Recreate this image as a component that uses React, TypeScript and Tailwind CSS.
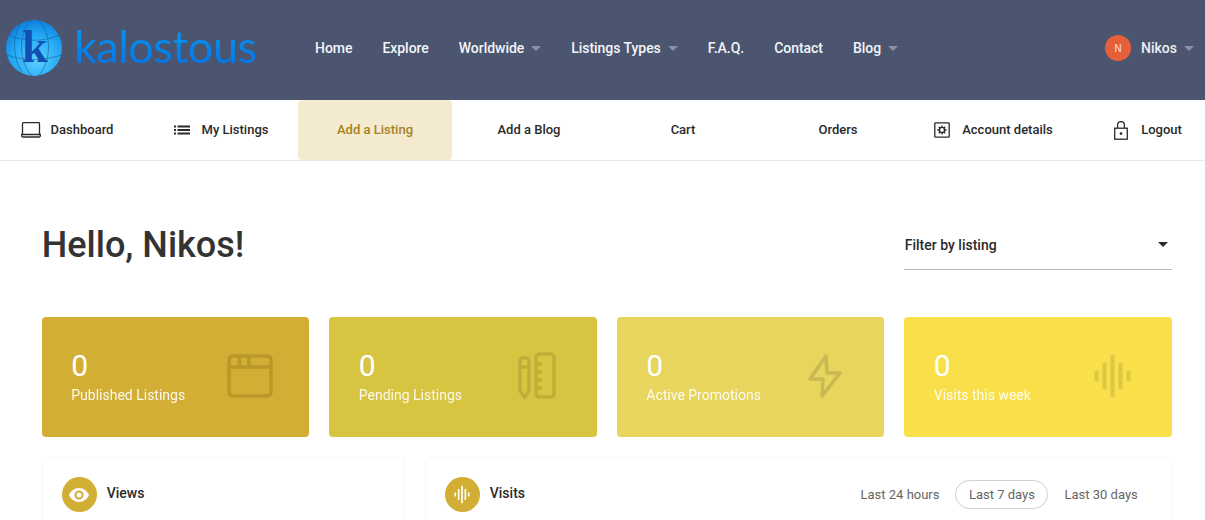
import type { ReactNode } from "react";

const navLinks = [
  { label: "Home" },
  { label: "Explore" },
  { label: "Worldwide", caret: true },
  { label: "Listings Types", caret: true },
  { label: "F.A.Q." },
  { label: "Contact" },
  { label: "Blog", caret: true },
];

function Caret({ className = "border-t-[#8a91a5]" }: { className?: string }) {
  return <span className={`inline-block h-0 w-0 border-x-[5px] border-t-[5px] border-x-transparent ${className}`} />;
}

function Globe() {
  return (
    <svg width="58" height="58" viewBox="0 0 58 58" className="shrink-0">
      <defs>
        <radialGradient id="globe" cx="0.55" cy="0.7" r="0.75">
          <stop offset="0" stopColor="#5fd0ff" />
          <stop offset="0.55" stopColor="#25aaf6" />
          <stop offset="1" stopColor="#0b78d8" />
        </radialGradient>
      </defs>
      <circle cx="29" cy="29" r="28" fill="url(#globe)" />
      <g fill="none" stroke="#155f96" strokeWidth="0.8" opacity="0.75">
        <path d="M27 1C12 14 14 44 27 57" />
        <path d="M33 1C48 14 46 44 33 57" />
        <path d="M4 16C18 23 40 23 54 16" />
        <path d="M2 36C18 42 40 42 56 36" />
        <path d="M15 5C7 20 8 40 17 53" />
      </g>
      <text x="17" y="43" fontFamily="'Liberation Serif', serif" fontWeight="700" fontSize="46" fill="#114fb4">k</text>
    </svg>
  );
}

function LaptopIcon() {
  return (
    <svg width="20" height="16" viewBox="0 0 20 16" fill="none" stroke="#2a2a2a" strokeWidth="1.3">
      <path d="M1.500 12.500V1.500a.8.8 0 0 1 .8-.8h15.400a.8.8 0 0 1 .8.8v11" />
      <path d="M.7 12.500h18.600v1.300a1.200 1.200 0 0 1-1.200 1.200H1.900a1.200 1.200 0 0 1-1.200-1.200z" />
    </svg>
  );
}

function ListIcon() {
  return (
    <svg width="16" height="10" viewBox="0 0 16 10" fill="#2a2a2a">
      <rect x="0" y="0.5" width="2" height="2" />
      <rect x="0" y="4" width="2" height="2" />
      <rect x="0" y="7.5" width="2" height="2" />
      <rect x="3.5" y="0.5" width="12.5" height="2" />
      <rect x="3.5" y="4" width="12.5" height="2" />
      <rect x="3.5" y="7.5" width="12.5" height="2" />
    </svg>
  );
}

function AccountIcon() {
  return (
    <svg width="16" height="16" viewBox="0 0 16 16" fill="none" stroke="#2a2a2a">
      <rect x="0.8" y="0.8" width="14.4" height="14.4" rx="0.8" strokeWidth="1.3" />
      <circle cx="8" cy="8" r="2.6" strokeWidth="1.4" />
      <path d="M8 3.400v2M8 10.600v2M3.400 8h2M10.600 8h2M4.800 4.800l1.400 1.400M9.800 9.800l1.400 1.400M11.200 4.800 9.800 6.200M6.200 9.800l-1.400 1.400" strokeWidth="1.3" />
    </svg>
  );
}

function LockIcon() {
  return (
    <svg width="16" height="19" viewBox="0 0 16 19" fill="none" stroke="#2a2a2a" strokeWidth="1.3">
      <rect x="1.7" y="7.2" width="12.6" height="11" />
      <path d="M4.600 7V4a3.400 3.400 0 0 1 6.800 0v3" />
      <circle cx="8" cy="12.6" r="1.3" fill="#2a2a2a" stroke="none" />
    </svg>
  );
}

const subLinks = [
  { label: "Dashboard", icon: <LaptopIcon />, extra: "gap-[10px]" },
  { label: "My Listings", icon: <ListIcon />, extra: "gap-3" },
  { label: "Add a Listing", active: true },
  { label: "Add a Blog" },
  { label: "Cart" },
  { label: "Orders", extra: "pl-[2px]" },
  { label: "Account details", icon: <AccountIcon />, extra: "gap-3 pl-[5px]" },
  { label: "Logout", icon: <LockIcon />, extra: "gap-3 pl-[5px]" },
];

function BrowserGlyph() {
  return (
    <svg width="46" height="44" viewBox="0 0 46 44" fill="none" stroke="currentColor" strokeWidth="3.5">
      <rect x="2" y="2" width="42" height="40" rx="4" />
      <path d="M2 13h42M12.500 2v11M22 2v11" />
    </svg>
  );
}

function PencilRulerGlyph() {
  return (
    <svg width="38" height="48" viewBox="0 0 38 48" fill="none" stroke="currentColor" strokeWidth="3.5">
      <path d="M2 10a4.500 4.500 0 0 1 9 0v29l-4.500 6L2 39z" />
      <path d="M2 15h9" />
      <rect x="18" y="2" width="18" height="43" rx="3.500" />
      <path d="M18 12h6M18 20h6M18 28h6M18 36h6" />
    </svg>
  );
}

function BoltGlyph() {
  return (
    <svg width="34" height="44" viewBox="0 0 34 44" fill="none" stroke="currentColor" strokeWidth="3.5" strokeLinejoin="round">
      <path d="M18 2 2 25h13l-1 17 18-23H19z" />
    </svg>
  );
}

function WaveGlyph({ w = 39, h = 44, sw = 4 }: { w?: number; h?: number; sw?: number }) {
  return (
    <svg width={w} height={h} viewBox="0 0 38 44" fill="none" stroke="currentColor" strokeWidth={sw}>
      <path d="M3 17v10M11 9v26M19 1v42M27 9v26M35 17v10" />
    </svg>
  );
}

const statCards = [
  { label: "Published Listings", bg: "bg-[#d2ae34]", tone: "text-[#b89829]", icon: <BrowserGlyph />, iconBox: "mr-[36px]" },
  { label: "Pending Listings", bg: "bg-[#d7c441]", tone: "text-[#bfae38]", icon: <PencilRulerGlyph />, iconBox: "mr-[41px]" },
  { label: "Active Promotions", bg: "bg-[#e7d55e]", tone: "text-[#c9b952]", icon: <BoltGlyph />, iconBox: "mr-[42px]" },
  { label: "Visits this week", bg: "bg-[#f9e04b]", tone: "text-[#dcc642]", icon: <WaveGlyph />, iconBox: "mr-[40px]" },
];

function CircleIcon({ children }: { children: ReactNode }) {
  return (
    <span className="flex h-[35px] w-[35px] shrink-0 items-center justify-center rounded-full bg-[#d2ae34] text-white">
      {children}
    </span>
  );
}

export default function App() {
  return (
    <div className="h-[520px] w-[1205px] overflow-hidden bg-white font-['Roboto',sans-serif] text-[#2a2a2a]">
      {/* Top bar */}
      <header className="flex h-[100px] items-center bg-[#4b5570] pb-1 pl-[5px] pr-[11px]">
        <div className="flex w-[310px] items-center gap-[11px]">
          <Globe />
          <span className="-mt-1 bg-linear-to-b from-[#0b9af0] to-[#0672e6] bg-clip-text font-['Lato',sans-serif] text-[45px] font-normal leading-none tracking-[-0.5px] text-transparent">
            kalostous
          </span>
        </div>
        <nav className="flex flex-1 items-center gap-[30px]">
          {navLinks.map((link) => (
            <a key={link.label} className="flex items-center gap-[7px] text-sm font-medium tracking-[-0.04px] text-[#f3f4f7]">
              {link.label}
              {link.caret && <Caret />}
            </a>
          ))}
        </nav>
        <div className="flex items-center">
          <span className="flex h-[26px] w-[26px] items-center justify-center rounded-full bg-[#e4603a] text-[10px] text-[#fbdcd2]">N</span>
          <span className="ml-[10px] text-sm font-medium text-[#eceef2]">Nikos</span>
          <span className="ml-[7px] flex"><Caret /></span>
        </div>
      </header>

      {/* Dashboard tabs */}
      <div className="flex h-[61px] overflow-hidden border-b border-[#e8e8e8]">
        <div className="-ml-[10px] flex">
          {subLinks.map((link) => (
            <a
              key={link.label}
              className={`flex h-[60px] w-[154px] shrink-0 items-center justify-center rounded text-[13px] font-medium ${link.extra ?? ""} ${
                link.active ? "bg-[#f3ead0] text-[#a5831a]" : "text-[#2a2a2a]"
              }`}
            >
              {link.icon}
              {link.label}
            </a>
          ))}
        </div>
      </div>

      <main className="pl-[41.75px] pr-[33.25px]">
        <div className="flex h-[109px] items-end justify-between">
          <h1 className="pb-[4px] text-[36px] font-medium leading-[42px] text-[#333]">Hello, Nikos!</h1>
          <div className="flex h-[49px] w-[268px] items-center justify-between border-b border-[#b9b9b9] pb-[1px] pl-px pr-[4px]">
            <span className="text-sm font-medium">Filter by listing</span>
            <Caret className="border-t-[#2a2a2a]" />
          </div>
        </div>

        {/* Stat cards */}
        <div className="mt-[47px] grid grid-cols-4 gap-5">
          {statCards.map((card) => (
            <div key={card.label} className={`flex h-[120px] items-center justify-between rounded pl-[29.5px] ${card.bg}`}>
              <div className="pb-[2px] text-white">
                <div className="text-[30px] leading-[35px]">0</div>
                <div className="mt-[2px] text-sm leading-5 opacity-90">{card.label}</div>
              </div>
              <div className={`-mt-[2px] ${card.tone} ${card.iconBox}`}>{card.icon}</div>
            </div>
          ))}
        </div>

        {/* Charts */}
        <div className="mt-5 flex gap-5">
          <section className="h-[120px] w-[363px] rounded border border-[#f8f8f8] px-[19px] pt-[19px]">
            <div className="flex items-start gap-[10px]">
              <CircleIcon>
                <svg width="20" height="14" viewBox="0 0 20 14" fill="white">
                  <path fillRule="evenodd" d="M10 0c4.600 0 8.200 3.200 10 7-1.800 3.800-5.400 7-10 7S1.800 10.800 0 7c1.800-3.800 5.400-7 10-7zm0 2.500a4.500 4.500 0 1 0 0 9 4.500 4.500 0 0 0 0-9zm0 2a2.500 2.500 0 1 1 0 5 2.500 2.500 0 0 1 0-5z" />
                </svg>
              </CircleIcon>
              <h3 className="pt-[8px] text-sm font-medium leading-[17px]">Views</h3>
            </div>
          </section>
          <section className="h-[120px] flex-1 rounded border border-[#f8f8f8] pl-[19px] pr-[33px] pt-[19px]">
            <div className="flex items-start justify-between">
              <div className="flex items-start gap-[10px]">
                <CircleIcon>
                  <WaveGlyph w={16} h={19} sw={4} />
                </CircleIcon>
                <h3 className="pt-[8px] text-sm font-medium leading-[17px]">Visits</h3>
              </div>
              <div className="flex items-center gap-4 pt-[3px] text-[13px] text-[#666]">
                <span>Last 24 hours</span>
                <span className="flex h-[29px] w-[93px] items-center justify-center rounded-full border border-[#cfcfd4]">Last 7 days</span>
                <span>Last 30 days</span>
              </div>
            </div>
          </section>
        </div>
      </main>
    </div>
  );
}
